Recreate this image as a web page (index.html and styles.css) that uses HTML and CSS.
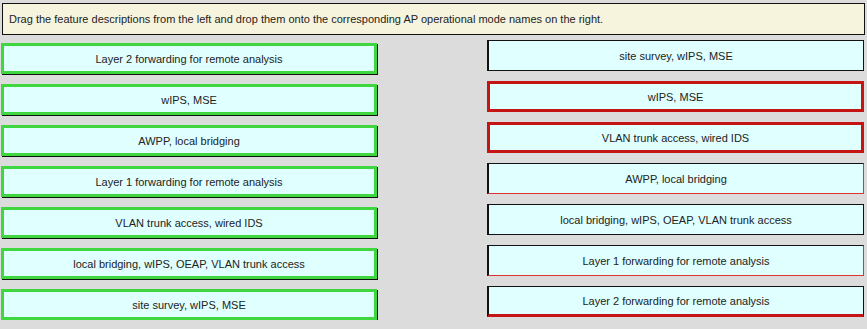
FILE: index.html
```html
<!DOCTYPE html>
<html lang="en">
<head>
    <meta charset="UTF-8">
    <title>Drag and Drop</title>
    <link rel="stylesheet" href="styles.css">
</head>
<body>
<div class="prompt">Drag the feature descriptions from the left and drop them onto the corresponding AP operational mode names on the right.</div>

<div class="board">
    <div class="column left">
        <div class="item">Layer 2 forwarding for remote analysis</div>
        <div class="item">wIPS, MSE</div>
        <div class="item">AWPP, local bridging</div>
        <div class="item">Layer 1 forwarding for remote analysis</div>
        <div class="item">VLAN trunk access, wired IDS</div>
        <div class="item">local bridging, wIPS, OEAP, VLAN trunk access</div>
        <div class="item">site survey, wIPS, MSE</div>
    </div>

    <div class="column right">
        <div class="target">site survey, wIPS, MSE</div>
        <div class="target wrong">wIPS, MSE</div>
        <div class="target wrong">VLAN trunk access, wired IDS</div>
        <div class="target thin-red">AWPP, local bridging</div>
        <div class="target">local bridging, wIPS, OEAP, VLAN trunk access</div>
        <div class="target thin-red">Layer 1 forwarding for remote analysis</div>
        <div class="target red-bottom">Layer 2 forwarding for remote analysis</div>
    </div>
</div>
</body>
</html>
```

FILE: styles.css
```css
body {
    margin: 0;
    padding: 3px 2px 0 1px;
    background-color: #dcdcdc;
    font-family: "Liberation Sans", Arial, sans-serif;
    font-size: 11px;
    color: #222;
}
.prompt {
    margin-left: 1px;
    height: 30px;
    line-height: 30px;
    padding-left: 6px;
    background-color: #f7f4dd;
    border: 1px solid #111;
}
.board {
    display: grid;
    grid-template-columns: 376px 377px;
    column-gap: 110px;
}
.column {
    display: flex;
    flex-direction: column;
    gap: 10px;
}
.left {
    margin-top: 8px;
}
.right {
    margin-top: 5px;
}
.item,
.target {
    height: 31px;
    box-sizing: border-box;
    display: flex;
    align-items: center;
    justify-content: center;
    background-color: #e0ffff;
}
.item {
    border: 3px solid #3fd63f;
    box-shadow: 1px 1px 0 #111;
}
.target {
    border: 1px solid #111;
    border-left-width: 2px;
}
.target.wrong {
    border: 3px solid #c41414;
}
.target.thin-red {
    border-color: #111 #d33 #d33 #111;
}
.target.red-bottom {
    border-bottom: 3px solid #c41414;
}
```
